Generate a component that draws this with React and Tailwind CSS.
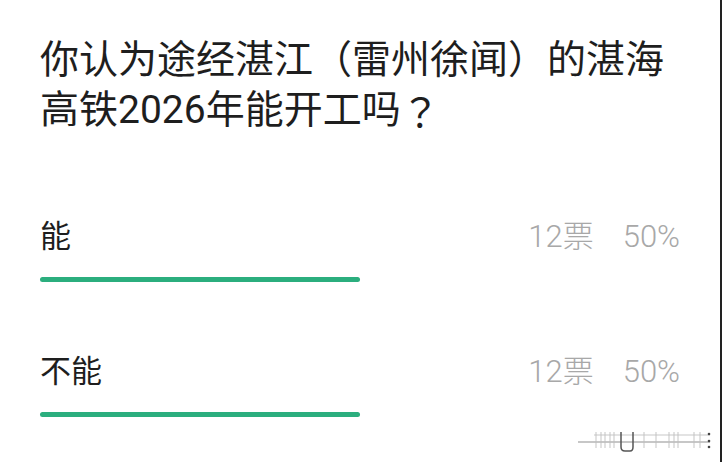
import React from 'react';

const options = [
  { label: '能', votes: 12, percent: 50 },
  { label: '不能', votes: 12, percent: 50 },
];

const Watermark = () => (
  <svg className="absolute left-[574px] top-[426px]" width="140" height="28" viewBox="0 0 140 28">
    <line x1="4" y1="16" x2="136" y2="16" stroke="#9a9a9a" strokeWidth="2" opacity="0.55" />
    <line x1="20" y1="9" x2="136" y2="9" stroke="#c8c8c8" strokeWidth="2" opacity="0.5" />
    {[22, 27, 31, 36, 40, 70, 82, 95, 100, 104, 120, 126].map(x => (
      <line key={x} x1={x} y1="6" x2={x} y2="22" stroke="#c0c0c0" strokeWidth="1.5" opacity="0.6" />
    ))}
    <path d="M47 6 L47 21 Q47 25 51 25 L56 25 Q59 25 59 21 L59 6" fill="none" stroke="#555" strokeWidth="1.5" />
    <circle cx="135" cy="8" r="1.3" fill="#444" />
    <circle cx="135" cy="15" r="1.3" fill="#444" />
    <circle cx="135" cy="21" r="1.3" fill="#444" />
  </svg>
);

export default function App() {
  return (
    <div className="relative w-[722px] h-[462px] overflow-hidden bg-white border-r-2 border-[#222] font-['Roboto','Noto_Sans_CJK_SC',sans-serif]">
      <div className="px-10 pt-[35px]">
        <h1 className="text-[39px] leading-[50px] font-normal text-[#1e1e1e]">
          你认为途经湛江（雷州徐闻）的湛海高铁2026年能开工吗<span className="inline-block align-top h-[50px] leading-[50px] font-['Noto_Sans_CJK_JP',sans-serif]">？</span>
        </h1>

        <div className="mt-[82px] flex flex-col gap-[70px]">
          {options.map(opt => (
            <div key={opt.label}>
              <div className="flex items-center justify-between h-[40px]">
                <span className="text-[31px] text-[#1e1e1e]">{opt.label}</span>
                <div className="flex items-center gap-[29px] text-[31px] font-light text-[#a8a8a8]">
                  <span>{opt.votes}票</span>
                  <span>{opt.percent}%</span>
                </div>
              </div>
              <div className="mt-[20px] h-[5px] w-full">
                <div className="h-full rounded-full bg-[#2bae7e]" style={{ width: `${opt.percent}%` }} />
              </div>
            </div>
          ))}
        </div>
      </div>
      <Watermark />
    </div>
  );
}
